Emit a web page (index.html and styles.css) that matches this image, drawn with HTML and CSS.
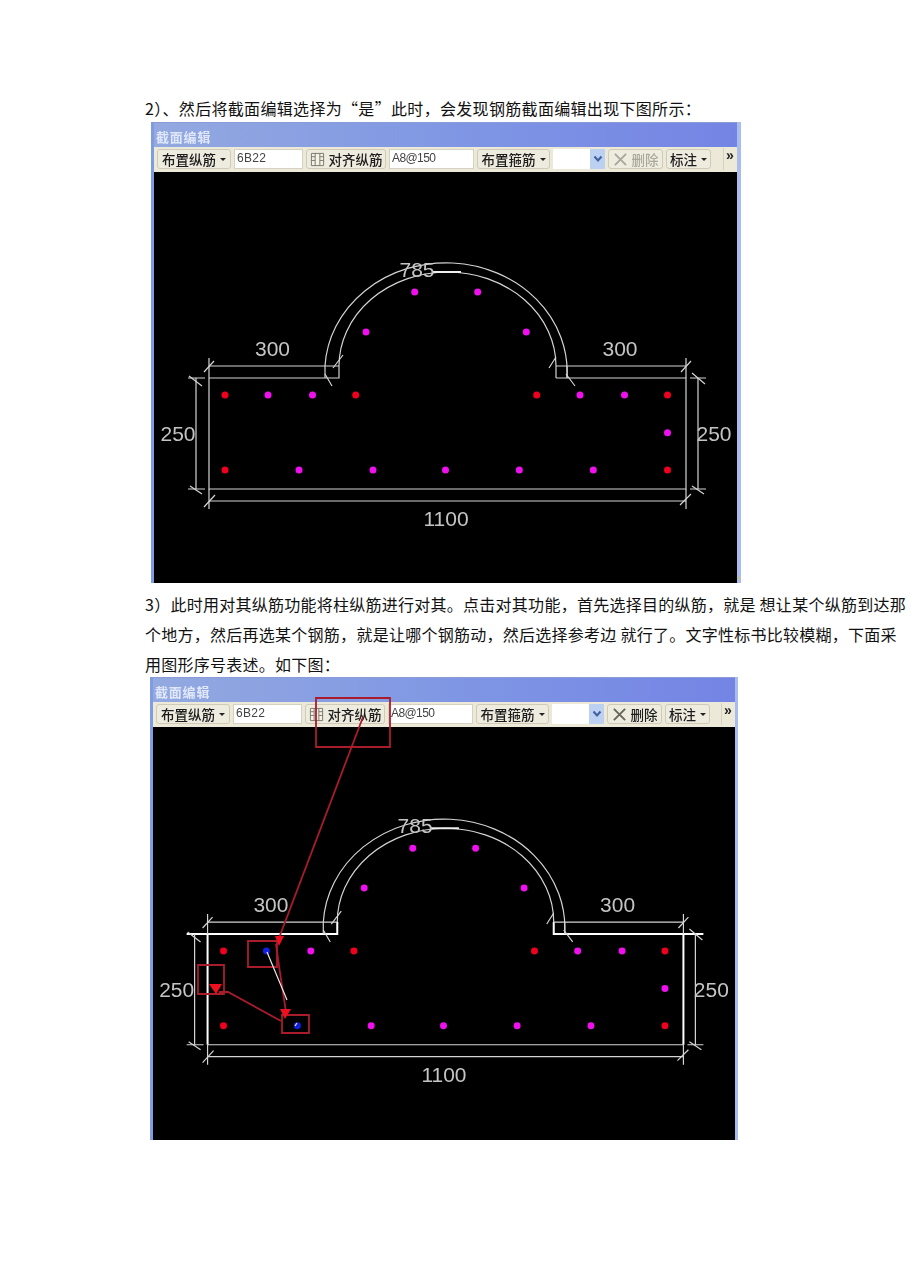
FILE: index.html
```html
<!DOCTYPE html>
<html lang="zh-CN">
<head>
<meta charset="utf-8">
<title>截面编辑</title>
<link rel="stylesheet" href="styles.css">
</head>
<body>
<main class="page">
  <p class="para para-first">2）、然后将截面编辑选择为“是”此时，会发现钢筋截面编辑出现下图所示：</p>

  <section class="window window-first">
    <div class="titlebar"><span class="title-text">截面编辑</span></div>
    <div class="toolbar">
      <button class="tool tool-wide">布置纵筋<i class="caret"></i></button>
      <span class="field field-a">6B22</span>
      <button class="tool tool-align"><svg class="ico" viewBox="0 0 16 16"><path d="M1.5 1.5h13v13h-13zM5.5 1.5v13M10.5 1.5v13M1.5 5h4M1.5 9h4M10.5 5h4M10.5 9h4" fill="#f4f2e6" stroke="#77756a"/></svg>对齐纵筋</button>
      <span class="field field-b">A8@150</span>
      <button class="tool tool-stir">布置箍筋<i class="caret"></i></button>
      <span class="select"><span class="select-btn"><svg viewBox="0 0 10 8"><path d="M1.5 1.5 5 5.5l3.5-4" fill="none" stroke="#3f5f9f" stroke-width="2"/></svg></span></span>
      <button class="tool tool-del is-off"><svg class="ico-x" viewBox="0 0 16 16"><path d="M2 2l12 12M14 2 2 14" stroke="#a9a89c" stroke-width="2"/></svg>删除</button>
      <button class="tool tool-mark">标注<i class="caret"></i></button>
      <span class="more">»</span>
    </div>
    <div class="canvas">
      <svg class="drawing" viewBox="154 172 583 411">
        <g class="shape">
          <path d="M209 378V489H686V378H556"/>
          <path d="M209 378H339V366"/>
          <path d="M556 378V366"/>
          <path d="M325 366A121 109 0 0 1 567 378"/>
          <path d="M339 366A108.500 94 0 0 1 556 366"/>
          <path d="M325 366V378M567 366V378"/>
        </g>
        <g class="dim">
          <path d="M209 366H339M556 366H686M196 378V489M698 378V489M209 501H686"/>
          <path d="M209 358V378M686 358V378M188 378H205M706 378H690M188 489H205M706 489H690M209 489V509M686 489V509"/>
          <path d="M204 372 214 361M681 372 691 361M325 374 332 386M566 374 575 386M189 376 202 386M692 373 705 384M190 486 202 494M692 486 704 494M204 507 215 495M680 505 691 494M333 368 343 355M549 368 556 357"/>
          <path class="thick" d="M433 272H461"/>
        </g>
        <g class="dim-text">
          <text x="272.500" y="356">300</text>
          <text x="620" y="356">300</text>
          <text x="178" y="441">250</text>
          <text x="714" y="441">250</text>
          <text x="446" y="526">1100</text>
          <text x="417" y="277">785</text>
        </g>
        <g class="dots-red">
          <circle cx="225" cy="395" r="3.500"/><circle cx="355.700" cy="395" r="3.500"/><circle cx="536.700" cy="395" r="3.500"/><circle cx="667.500" cy="395" r="3.500"/><circle cx="225" cy="470" r="3.500"/><circle cx="667.500" cy="470" r="3.500"/>
        </g>
        <g class="dots-magenta">
          <circle cx="268" cy="395" r="3.500"/><circle cx="312.500" cy="395" r="3.500"/><circle cx="580" cy="395" r="3.500"/><circle cx="624.500" cy="395" r="3.500"/><circle cx="299" cy="470" r="3.500"/><circle cx="373" cy="470" r="3.500"/><circle cx="445.500" cy="470" r="3.500"/><circle cx="519.300" cy="470" r="3.500"/><circle cx="593.300" cy="470" r="3.500"/><circle cx="667.500" cy="432.700" r="3.500"/><circle cx="414.700" cy="292" r="3.500"/><circle cx="477.700" cy="292" r="3.500"/><circle cx="366" cy="332" r="3.500"/><circle cx="526.300" cy="332" r="3.500"/>
        </g>
      </svg>
    </div>
    <span class="grip"></span>
  </section>

  <p class="para para-second">3）此时用对其纵筋功能将柱纵筋进行对其。点击对其功能，首先选择目的纵筋，就是 想让某个纵筋到达那个地方，然后再选某个钢筋，就是让哪个钢筋动，然后选择参考边 就行了。文字性标书比较模糊，下面采用图形序号表述。如下图：</p>

  <section class="window window-second">
    <div class="titlebar"><span class="title-text">截面编辑</span></div>
    <div class="toolbar">
      <button class="tool tool-wide">布置纵筋<i class="caret"></i></button>
      <span class="field field-a">6B22</span>
      <button class="tool tool-align"><svg class="ico" viewBox="0 0 16 16"><path d="M1.5 1.5h13v13h-13zM5.5 1.500v13M10.500 1.500v13M1.500 5h4M1.500 9h4M10.500 5h4M10.500 9h4" fill="#f4f2e6" stroke="#77756a"/></svg>对齐纵筋</button>
      <span class="field field-b">A8@150</span>
      <button class="tool tool-stir">布置箍筋<i class="caret"></i></button>
      <span class="select"><span class="select-btn"><svg viewBox="0 0 10 8"><path d="M1.500 1.500 5 5.500l3.500-4" fill="none" stroke="#3f5f9f" stroke-width="2"/></svg></span></span>
      <button class="tool tool-del"><svg class="ico-x" viewBox="0 0 16 16"><path d="M2 2l12 12M14 2 2 14" stroke="#66655c" stroke-width="2"/></svg>删除</button>
      <button class="tool tool-mark">标注<i class="caret"></i></button>
      <span class="more">»</span>
    </div>
    <div class="canvas">
      <svg class="drawing" viewBox="153 726 582 414">
        <g transform="translate(-2 555.500)">
          <g class="shape">
            <path d="M686 489H209"/>
            <path class="heavy" d="M209 378V489M686 378V489"/>
            <path class="heavy" d="M188 378H339V366M556 366V378H706"/>
            <path d="M325 366A121 109 0 0 1 567 378"/>
            <path d="M339 366A108.500 94 0 0 1 556 366"/>
            <path d="M325 366V378M567 366V378"/>
          </g>
          <g class="dim">
            <path d="M209 366H339M556 366H686M196 378V489M698 378V489M209 501H686"/>
            <path d="M209 358V378M686 358V378M188 489H205M706 489H690M209 489V509M686 489V509"/>
            <path d="M204 372 214 361M681 372 691 361M325 374 332 386M566 374 575 386M189 376 202 386M692 373 705 384M190 486 202 494M692 486 704 494M204 507 215 495M680 505 691 494M333 368 343 355M549 368 556 357"/>
            <path class="thick" d="M433 272H461"/>
          </g>
          <g class="dim-text">
            <text x="272.500" y="356">300</text>
            <text x="620" y="356">300</text>
            <text x="178" y="441">250</text>
            <text x="714" y="441">250</text>
            <text x="446" y="526">1100</text>
            <text x="417" y="277">785</text>
          </g>
          <g class="dots-red">
            <circle cx="225" cy="395" r="3.500"/><circle cx="355.700" cy="395" r="3.500"/><circle cx="536.700" cy="395" r="3.500"/><circle cx="667.500" cy="395" r="3.500"/><circle cx="225" cy="470" r="3.500"/><circle cx="667.500" cy="470" r="3.500"/>
          </g>
          <g class="dots-magenta">
            <circle cx="312.500" cy="395" r="3.500"/><circle cx="580" cy="395" r="3.500"/><circle cx="624.500" cy="395" r="3.500"/><circle cx="373" cy="470" r="3.500"/><circle cx="445.500" cy="470" r="3.500"/><circle cx="519.300" cy="470" r="3.500"/><circle cx="593.300" cy="470" r="3.500"/><circle cx="667.500" cy="432.700" r="3.500"/><circle cx="414.700" cy="292" r="3.500"/><circle cx="477.700" cy="292" r="3.500"/><circle cx="366" cy="332" r="3.500"/><circle cx="526.300" cy="332" r="3.500"/>
          </g>
          <g class="dots-blue">
            <circle cx="268" cy="395" r="3.500"/><circle cx="299" cy="470" r="3.500"/>
          </g>
        </g>
      </svg>
    </div>
    <svg class="markup" viewBox="150 677 588 463">
      <g class="mark-lines">
        <path d="M316 698H390V747H316Z"/>
        <path d="M248 941H277V967H248Z"/>
        <path d="M198 965H224V994H198Z"/>
        <path d="M282 1015H309V1033H282Z"/>
        <path d="M363 717 279 938"/>
        <path d="M276 944 279 966 286 1012"/>
        <path d="M219 992H228L281 1021"/>
      </g>
      <g class="mark-heads">
        <path d="M275 936H284L279 946Z"/>
        <path d="M209 984H222L216 994Z"/>
        <path d="M280 1009H291L285 1019Z"/>
      </g>
      <path class="mark-white" d="M267 952 287 1000M295 1026 297 1023"/>
    </svg>
  </section>
</main>
</body>
</html>
```

FILE: styles.css
```css
* { box-sizing: border-box; }

html, body { margin: 0; padding: 0; background: #fff; }

body {
  width: 920px;
  height: 1276px;
  overflow: hidden;
  font-family: "Noto Sans CJK SC", "Liberation Serif", serif;
  color: #111;
}

.page { padding-top: 93px; }

.para {
  margin: 0 0 0 145px;
  width: 764px;
  font-size: 16px;
  line-height: 30px;
}

.para-first { height: 29px; letter-spacing: 0.32px; }

.para-second { margin-top: 6px; margin-bottom: -2px; letter-spacing: 0.26px; }

.window {
  position: relative;
  display: flex;
  flex-direction: column;
  border-left: 3px solid #7f9be2;
  border-right: 4px solid #a9bcec;
  background: #ece9d8;
}

.window-first { margin-left: 151px; width: 590px; height: 461px; }

.window-second { margin-left: 150px; width: 588px; height: 463px; border-right-width: 3px; }

.titlebar {
  flex: none;
  height: 25px;
  display: flex;
  align-items: center;
  padding: 3px 0 0 2px;
  background: linear-gradient(90deg, #93a9e0, #8097e4 50%, #7484e4);
  border-top: 1px solid #8b9bd6;
}

.title-text {
  font: 700 13px "Noto Sans CJK SC", sans-serif;
  letter-spacing: 0.8px;
  color: #dfe7f8;
  filter: blur(0.7px);
}

.toolbar {
  flex: none;
  height: 25px;
  display: flex;
  align-items: center;
  gap: 3px;
  padding: 0 1px 1px 3px;
  background: #ece9d8;
  filter: blur(0.4px);
}

.tool {
  height: 20px;
  display: flex;
  align-items: center;
  justify-content: center;
  gap: 4px;
  padding: 0;
  border: 1px solid #cfcbb6;
  border-radius: 3px;
  background: #eeecdf;
  font: 500 13.500px "Noto Sans CJK SC", sans-serif;
  color: #1c1c1c;
}

.tool-wide { width: 74px; }
.tool-align { width: 80px; }
.tool-stir { width: 73px; }
.tool-del { width: 55px; }
.tool-mark { width: 45px; }

.is-off { color: #a9a89c; }

.caret {
  width: 0;
  height: 0;
  border: 3px solid transparent;
  border-top: 3px solid #222;
  border-bottom: 0;
}

.ico { width: 15px; height: 15px; }
.ico-x { width: 15px; height: 15px; }

.field {
  height: 20px;
  display: flex;
  align-items: center;
  padding: 0 0 3px 2px;
  background: #fff;
  border: 1px solid #d5d2c2;
  font: 12px "Liberation Sans", sans-serif;
  color: #444;
  letter-spacing: 0.3px;
}

.field-a { width: 69px; }
.field-b { width: 85px; letter-spacing: -0.6px; }

.select {
  width: 52px;
  height: 20px;
  display: flex;
  justify-content: flex-end;
  background: #fff;
}

.select-btn {
  width: 15px;
  display: flex;
  align-items: center;
  justify-content: center;
  background: #bcd0f2;
}

.select-btn svg { width: 10px; height: 8px; }

.more {
  margin-left: auto;
  width: 13px;
  height: 22px;
  font: 700 14px/14px "Liberation Sans", sans-serif;
  color: #222;
  text-align: center;
  border-left: 1px solid #d5d2c2;
}

.canvas { flex: 1; min-height: 0; background: #000; }

.drawing { display: block; width: 100%; height: 100%; filter: blur(0.3px); }

.shape path, .dim path { fill: none; stroke: #d4d4d4; stroke-width: 1.2; }

.shape .heavy { stroke: #fff; stroke-width: 2; }

.dim .thick { stroke: #eee; stroke-width: 2; }

.dim-text text {
  font: 21px "Liberation Sans", sans-serif;
  fill: #c4c4c4;
  text-anchor: middle;
}

.dots-red { fill: #f0001e; }
.dots-magenta { fill: #f010ee; }
.dots-blue { fill: #1020e0; }

.grip {
  position: absolute;
  right: -4px;
  bottom: 3px;
  width: 4px;
  height: 4px;
  background: #b9bdc4;
}

.markup {
  position: absolute;
  top: 0;
  left: -3px;
  width: 588px;
  height: 463px;
  pointer-events: none;
}

.mark-lines path { fill: none; stroke: #a81c2c; stroke-width: 1.8; }
.mark-heads path { fill: #ee1020; }
.mark-white { fill: none; stroke: #e8e8e8; stroke-width: 1.2; }
```
